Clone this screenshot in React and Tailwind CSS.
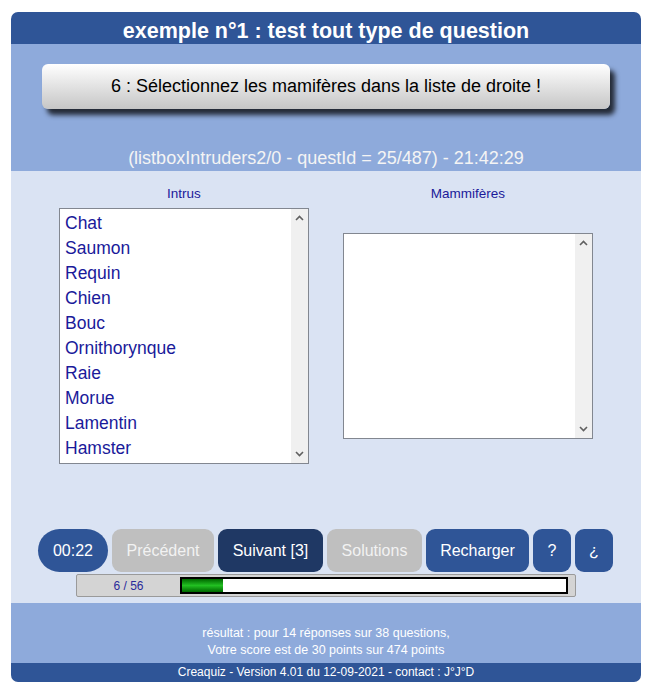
const intrus = ['Chat', 'Saumon', 'Requin', 'Chien', 'Bouc', 'Ornithorynque', 'Raie', 'Morue', 'Lamentin', 'Hamster']

function Scrollbar() {
  return (
    <div className="w-[17px] bg-[#f0f0f0] flex flex-col justify-between items-center py-[6px] text-[#606060]">
      <svg width="9" height="6" viewBox="0 0 9 6">
        <path d="M1 5 L4.5 1.5 L8 5" fill="none" stroke="currentColor" strokeWidth="1.6" />
      </svg>
      <svg width="9" height="6" viewBox="0 0 9 6">
        <path d="M1 1 L4.5 4.5 L8 1" fill="none" stroke="currentColor" strokeWidth="1.6" />
      </svg>
    </div>
  )
}

function ListBox({ items, height }) {
  return (
    <div className={`w-[250px] ${height} bg-white border border-[#828790] flex`}>
      <ul className="flex-1 pt-[2px] pl-[5px]">
        {items.map(item => (
          <li key={item} className="h-[25px] leading-[25px] text-[17.5px] text-[#1a1a9a]">
            {item}
          </li>
        ))}
      </ul>
      <Scrollbar />
    </div>
  )
}

export default function App() {
  return (
    <div className="min-h-[690px] bg-white pt-3 pl-[11px]" style={{ fontFamily: '"Liberation Sans", Arial, sans-serif' }}>
      <div className="w-[630px] rounded-[7px] overflow-hidden">
        {/* Title */}
        <div className="h-8 pt-[6px] bg-[#2f5597] text-white font-bold text-[21.5px] flex items-center justify-center">
          exemple n°1 : test tout type de question
        </div>

        {/* Question */}
        <div className="h-[127px] bg-[#8eaadb] pt-5">
          <div className="mx-[31px] h-[45px] rounded-md bg-gradient-to-b from-white to-[#c6c6c6] shadow-[5px_6px_5px_rgba(0,0,0,0.75)] flex items-center justify-center text-[18px] text-black">
            6 : Sélectionnez les mamifères dans la liste de droite !
          </div>
          <div className="mt-[36px] text-center text-[18px] text-[#f4f4f4]">
            (listboxIntruders2/0 - questId = 25/487) - 21:42:29
          </div>
        </div>

        {/* Lists */}
        <div className="h-[432px] bg-[#dae3f3] pt-[13px]">
          <div className="grid grid-cols-2 px-[31px] text-[13.5px] text-[#1a1a9a] text-center">
            <div>Intrus</div>
            <div>Mammifères</div>
          </div>
          <div className="grid grid-cols-2 px-[31px] mt-[4px] items-center justify-items-center">
            <ListBox items={intrus} height="h-[256px]" />
            <ListBox items={[]} height="h-[206px]" />
          </div>

          {/* Controls */}
          <div className="mt-[65px] ml-[27px] flex gap-1 text-[16px] text-white">
            <div className="w-[70px] h-[43px] rounded-[22px] bg-[#2f5597] flex items-center justify-center">00:22</div>
            <div className="w-[102px] h-[43px] rounded-[9px] bg-[#bfbfbf] text-[#f2f2f2] flex items-center justify-center">Précédent</div>
            <div className="w-[105px] h-[43px] rounded-[9px] bg-[#1f3864] flex items-center justify-center">Suivant [3]</div>
            <div className="w-[95px] h-[43px] rounded-[9px] bg-[#bfbfbf] text-[#f2f2f2] flex items-center justify-center">Solutions</div>
            <div className="w-[103px] h-[43px] rounded-[9px] bg-[#2f5597] flex items-center justify-center">Recharger</div>
            <div className="w-[38px] h-[43px] rounded-[9px] bg-[#2f5597] flex items-center justify-center">?</div>
            <div className="w-[38px] h-[43px] rounded-[9px] bg-[#2f5597] flex items-center justify-center">¿</div>
          </div>
          <div className="ml-[65px] mt-[2px] w-[500px] h-[23px] bg-[#d4d4d4] border border-[#9a9a9a] rounded-[2px] flex items-center">
            <div className="w-[103px] text-center text-[12px] text-[#2a2a9a]">6 / 56</div>
            <div className="w-[388px] h-[17px] border-2 border-black bg-white">
              <div className="w-[41px] h-full bg-gradient-to-b from-[#006800] via-[#22c022] to-[#006800]" />
            </div>
          </div>
        </div>

        {/* Result */}
        <div className="h-[60px] bg-[#8eaadb] pt-[22px] text-center text-[12.5px] leading-[17px] text-white">
          <div>résultat : pour 14 réponses sur 38 questions,</div>
          <div>Votre score est de 30 points sur 474 points</div>
        </div>
        <div className="h-[19px] bg-[#2f5597] text-center text-[12px] leading-[19px] text-white">
          Creaquiz - Version 4.01 du 12-09-2021 - contact : J°J°D
        </div>
      </div>
    </div>
  )
}
